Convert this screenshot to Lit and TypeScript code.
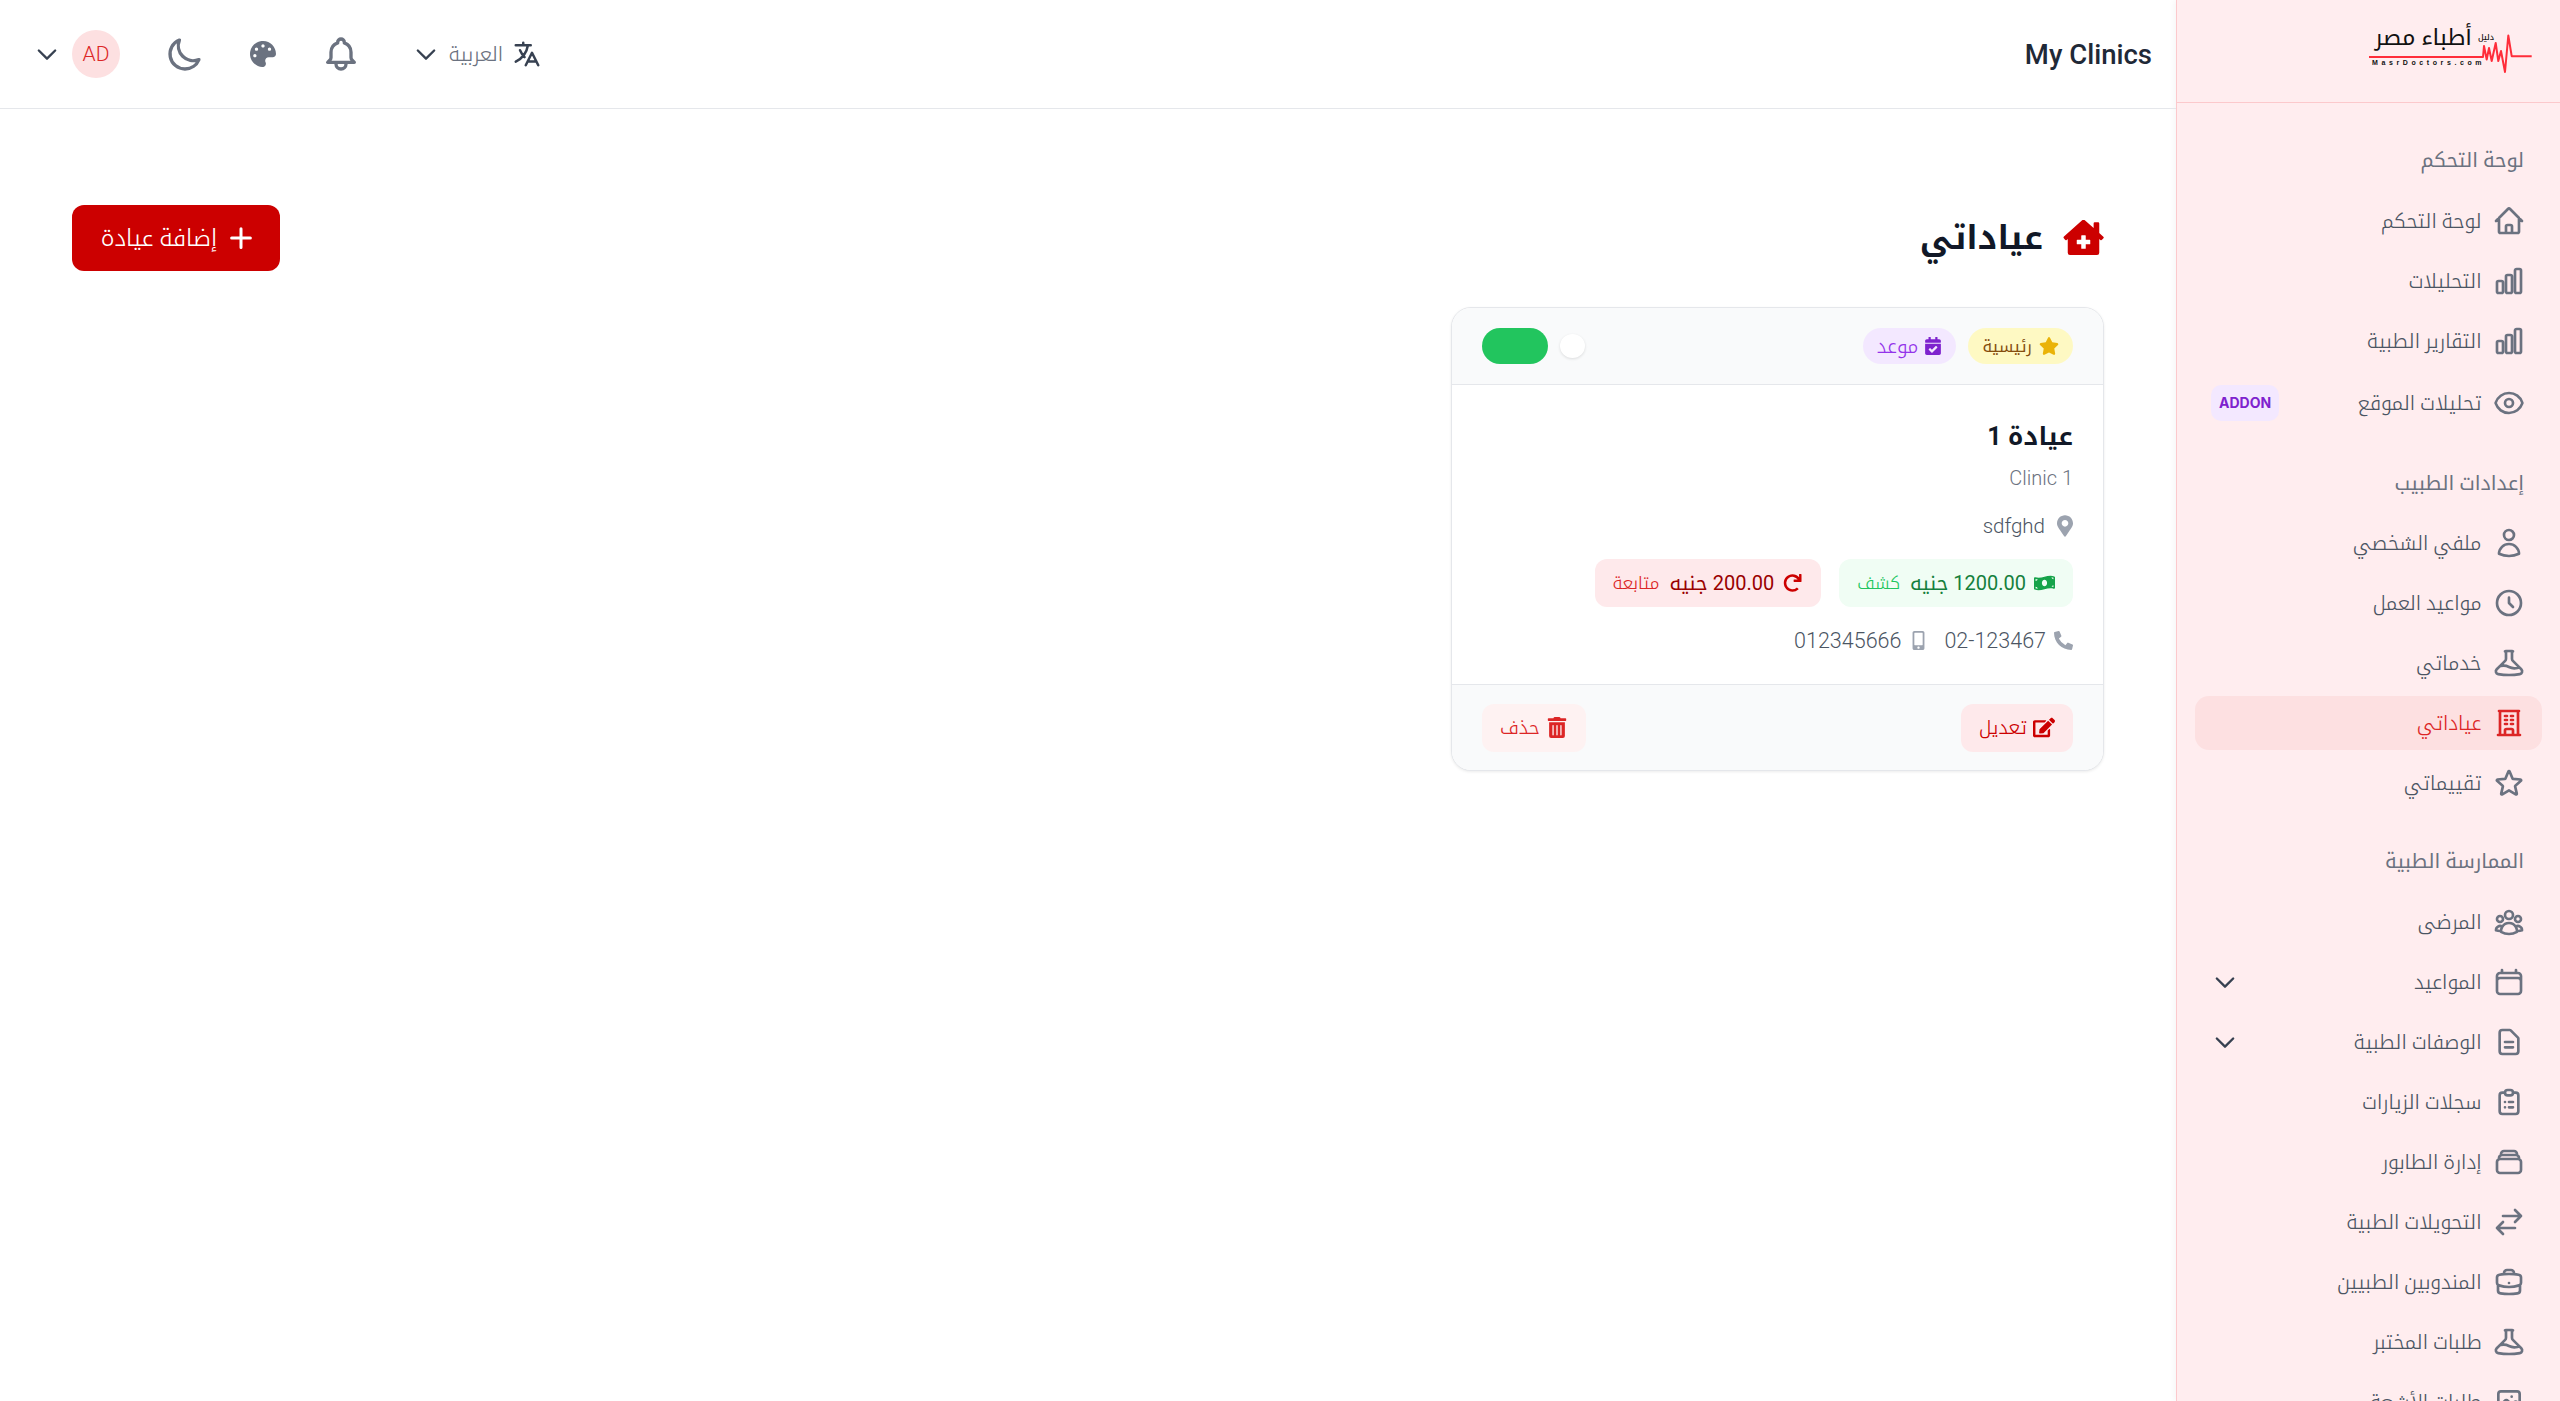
import { LitElement, html, css, svg } from "lit";
import { customElement } from "lit/decorators.js";

const O: Record<string, string> = {
  home: "M2.25 12l8.954-8.955c.44-.439 1.152-.439 1.591 0L21.75 12M4.5 9.75v10.125c0 .621.504 1.125 1.125 1.125H9.75v-4.875c0-.621.504-1.125 1.125-1.125h2.25c.621 0 1.125.504 1.125 1.125V21h4.125c.621 0 1.125-.504 1.125-1.125V9.75M8.25 21h8.25",
  chart: "M3 13.125C3 12.504 3.504 12 4.125 12h2.25c.621 0 1.125.504 1.125 1.125v6.75C7.5 20.496 6.996 21 6.375 21h-2.25A1.125 1.125 0 013 19.875v-6.75zM9.75 8.625c0-.621.504-1.125 1.125-1.125h2.25c.621 0 1.125.504 1.125 1.125v11.25c0 .621-.504 1.125-1.125 1.125h-2.25a1.125 1.125 0 01-1.125-1.125V8.625zM16.5 4.125c0-.621.504-1.125 1.125-1.125h2.25C20.496 3 21 3.504 21 4.125v15.75c0 .621-.504 1.125-1.125 1.125h-2.25a1.125 1.125 0 01-1.125-1.125V4.125z",
  eye: "M2.036 12.322a1.012 1.012 0 010-.639C3.423 7.51 7.36 4.5 12 4.5c4.638 0 8.573 3.007 9.963 7.178.07.207.07.431 0 .639C20.577 16.49 16.64 19.5 12 19.5c-4.638 0-8.573-3.007-9.963-7.178zM15 12a3 3 0 11-6 0 3 3 0 016 0z",
  user: "M15.75 6a3.75 3.75 0 11-7.5 0 3.75 3.75 0 017.5 0zM4.501 20.118a7.5 7.5 0 0114.998 0A17.933 17.933 0 0112 21.75c-2.676 0-5.216-.584-7.499-1.632z",
  clock: "M12 8v4l3 3m6-3a9 9 0 11-18 0 9 9 0 0118 0z",
  beaker: "M9.75 3.104v5.714a2.25 2.25 0 01-.659 1.591L5 14.5M9.75 3.104c-.251.023-.501.05-.75.082m.75-.082a24.301 24.301 0 014.5 0m0 0v5.714c0 .597.237 1.17.659 1.591L19.8 15.3M14.25 3.104c.251.023.501.05.75.082M19.8 15.3l-1.57.393A9.065 9.065 0 0112 15a9.065 9.065 0 00-6.23-.693L5 14.5m14.8.8l1.402 1.402c1.232 1.232.65 3.318-1.067 3.611A48.309 48.309 0 0112 21c-2.773 0-5.491-.235-8.135-.687-1.718-.293-2.3-2.379-1.067-3.61L5 14.5",
  building: "M3.75 21h16.5M4.5 3h15M5.25 3v18m13.5-18v18M9 6.75h1.5m-1.5 3h1.5m-1.5 3h1.5m3-6H15m-1.5 3H15m-1.5 3H15M9 21v-3.375c0-.621.504-1.125 1.125-1.125h3.75c.621 0 1.125.504 1.125 1.125V21",
  star: "M11.48 3.499a.562.562 0 011.04 0l2.125 5.111a.563.563 0 00.475.345l5.518.442c.499.04.701.663.321.988l-4.204 3.602a.563.563 0 00-.182.557l1.285 5.385a.562.562 0 01-.84.61l-4.725-2.885a.563.563 0 00-.586 0L6.982 20.54a.562.562 0 01-.84-.61l1.285-5.386a.562.562 0 00-.182-.557l-4.204-3.602a.563.563 0 01.321-.988l5.518-.442a.563.563 0 00.475-.345L11.48 3.5z",
  group: "M18 18.72a9.094 9.094 0 003.741-.479 3 3 0 00-4.682-2.72m.94 3.198l.001.031c0 .225-.012.447-.037.666A11.944 11.944 0 0112 21c-2.17 0-4.207-.576-5.963-1.584A6.062 6.062 0 016 18.719m12 0a5.971 5.971 0 00-.941-3.197m0 0A5.995 5.995 0 0012 12.75a5.995 5.995 0 00-5.058 2.772m0 0a3 3 0 00-4.681 2.72 8.986 8.986 0 003.74.477m.94-3.197a5.971 5.971 0 00-.94 3.197M15 6.75a3 3 0 11-6 0 3 3 0 016 0zm6 3a2.25 2.25 0 11-4.5 0 2.25 2.25 0 014.5 0zm-13.5 0a2.25 2.25 0 11-4.5 0 2.25 2.25 0 014.5 0z",
  calendar: "M6.75 3v2.25M17.25 3v2.25M3 18.75V7.5a2.25 2.25 0 012.25-2.25h13.5A2.25 2.25 0 0121 7.5v11.25m-18 0A2.25 2.25 0 005.25 21h13.5A2.25 2.25 0 0021 18.75m-18 0v-7.5A2.25 2.25 0 015.25 9h13.5A2.25 2.25 0 0121 11.25v7.5",
  doc: "M9 12h6m-6 4h6m2 5H7a2 2 0 01-2-2V5a2 2 0 012-2h5.586a1 1 0 01.707.293l5.414 5.414a1 1 0 01.293.707V19a2 2 0 01-2 2z",
  clip: "M9 5H7a2 2 0 00-2 2v12a2 2 0 002 2h10a2 2 0 002-2V7a2 2 0 00-2-2h-2M9 5a2 2 0 002 2h2a2 2 0 002-2M9 5a2 2 0 012-2h2a2 2 0 012 2m-3 7h3m-3 4h3m-6-4h.01M9 16h.01",
  stack: "M6 6.878V6a2.25 2.25 0 012.25-2.25h7.5A2.25 2.25 0 0118 6v.878m-12 0c.235-.083.487-.128.75-.128h10.5c.263 0 .515.045.75.128m-12 0A2.25 2.25 0 004.5 9v.878m13.5-3A2.25 2.25 0 0119.5 9v.878m0 0a2.246 2.246 0 00-.75-.128H5.25c-.263 0-.515.045-.75.128m15 0A2.25 2.25 0 0121 12v6a2.25 2.25 0 01-2.25 2.25H5.25A2.25 2.25 0 013 18v-6c0-.98.626-1.813 1.5-2.122",
  arrows: "M7.5 21L3 16.5m0 0L7.5 12M3 16.5h13.5m0-13.5L21 7.5m0 0L16.5 12M21 7.5H7.5",
  case: "M20.25 14.15v4.25c0 1.094-.787 2.036-1.872 2.18-2.087.277-4.216.42-6.378.42s-4.291-.143-6.378-.42c-1.085-.144-1.872-1.086-1.872-2.18v-4.25m16.5 0a2.18 2.18 0 00.75-1.661V8.706c0-1.081-.768-2.015-1.837-2.175a48.114 48.114 0 00-3.413-.387m4.5 8.006c-.194.165-.42.295-.673.38A23.978 23.978 0 0112 15.75c-2.648 0-5.195-.429-7.577-1.22a2.016 2.016 0 01-.673-.38m0 0A2.18 2.18 0 013 12.489V8.706c0-1.081.768-2.015 1.837-2.175a48.111 48.111 0 013.413-.387m7.5 0V5.25A2.25 2.25 0 0013.5 3h-3a2.25 2.25 0 00-2.25 2.25v.894m7.5 0a48.667 48.667 0 00-7.5 0M12 12.75h.008v.008H12v-.008z",
  photo: "M4 16l4.586-4.586a2 2 0 012.828 0L16 16m-2-2l1.586-1.586a2 2 0 012.828 0L20 14m-6-6h.01M6 20h12a2 2 0 002-2V6a2 2 0 00-2-2H6a2 2 0 00-2 2v12a2 2 0 002 2z",
  moon: "M20.354 15.354A9 9 0 018.646 3.646 9.003 9.003 0 0012 21a9.003 9.003 0 008.354-5.646z",
  bell: "M15 17h5l-1.405-1.405A2.032 2.032 0 0118 14.158V11a6.002 6.002 0 00-4-5.659V5a2 2 0 10-4 0v.341C7.67 6.165 6 8.388 6 11v3.159c0 .538-.214 1.055-.595 1.436L4 17h5m6 0v1a3 3 0 11-6 0v-1m6 0H9",
  translate: "M3 5h12M9 3v2m1.048 9.5A18.022 18.022 0 016.412 9m6.088 9h7M11 21l5-10 5 10M12.751 5C11.783 10.77 8.07 15.61 3 18.129",
  chevron: "M19 9l-7 7-7-7",
  plus: "M12 4.5v15m7.5-7.5h-15",
};

const F: Record<string, [string, string]> = {
  star: ["0 0 576 512", "M259.3 17.8L194 150.2 47.9 171.5c-26.2 3.8-36.7 36.1-17.7 54.6l105.7 103-25 145.5c-4.5 26.3 23.2 46 46.4 33.7L288 439.6l130.7 68.7c23.2 12.2 50.9-7.4 46.4-33.7l-25-145.5 105.7-103c19-18.5 8.5-50.8-17.7-54.6L382 150.2 316.7 17.8c-11.7-23.6-45.6-23.9-57.4 0z"],
  pin: ["0 0 384 512", "M172.268 501.67C26.97 291.031 0 263.413 0 192 0 85.961 85.961 0 192 0s192 85.961 192 192c0 71.413-26.97 99.031-172.268 309.67-9.535 13.774-29.93 13.773-39.464 0zM192 272c44.183 0 80-35.817 80-80s-35.817-80-80-80-80 35.817-80 80 35.817 80 80 80z"],
  phone: ["0 0 512 512", "M497.39 361.8l-112-48a24 24 0 0 0-28 6.9l-49.6 60.6A370.66 370.66 0 0 1 130.6 204.11l60.6-49.6a23.94 23.94 0 0 0 6.9-28l-48-112A24.16 24.16 0 0 0 122.6.61l-104 24A24 24 0 0 0 0 48c0 256.5 207.9 464 464 464a24 24 0 0 0 23.4-18.6l24-104a24.29 24.29 0 0 0-14.01-27.6z"],
  mobile: ["0 0 320 512", "M272 0H48C21.5 0 0 21.5 0 48v416c0 26.5 21.5 48 48 48h224c26.5 0 48-21.5 48-48V48c0-26.5-21.5-48-48-48zM160 480c-17.7 0-32-14.3-32-32s14.3-32 32-32 32 14.3 32 32-14.3 32-32 32zm112-108c0 6.6-5.4 12-12 12H60c-6.6 0-12-5.4-12-12V60c0-6.6 5.4-12 12-12h200c6.6 0 12 5.4 12 12v312z"],
  edit: ["0 0 576 512", "M402.6 83.2l90.2 90.2c3.8 3.8 3.8 10 0 13.8L274.4 405.6l-92.8 10.3c-12.4 1.4-22.9-9.1-21.5-21.5l10.3-92.8L388.8 83.2c3.8-3.8 10-3.8 13.8 0zm162-22.9l-48.8-48.8c-15.2-15.2-39.9-15.2-55.2 0l-35.4 35.4c-3.8 3.8-3.8 10 0 13.8l90.2 90.2c3.8 3.8 10 3.8 13.8 0l35.4-35.4c15.2-15.3 15.2-40 0-55.2zM384 346.2V448H64V128h229.8c3.2 0 6.2-1.3 8.5-3.5l40-40c7.6-7.6 2.2-20.5-8.5-20.5H48C21.5 64 0 85.5 0 112v352c0 26.5 21.5 48 48 48h352c26.5 0 48-21.5 48-48V306.2c0-10.7-12.9-16-20.5-8.5l-40 40c-2.2 2.3-3.5 5.3-3.5 8.5z"],
  trash: ["0 0 448 512", "M32 464a48 48 0 0 0 48 48h288a48 48 0 0 0 48-48V128H32zm272-256a16 16 0 0 1 32 0v224a16 16 0 0 1-32 0zm-96 0a16 16 0 0 1 32 0v224a16 16 0 0 1-32 0zm-96 0a16 16 0 0 1 32 0v224a16 16 0 0 1-32 0zM432 32H312l-9.4-18.7A24 24 0 0 0 281.1 0H166.8a23.72 23.72 0 0 0-21.4 13.3L136 32H16A16 16 0 0 0 0 48v32a16 16 0 0 0 16 16h416a16 16 0 0 0 16-16V48a16 16 0 0 0-16-16z"],
  redo: ["0 0 512 512", "M500.33 0h-47.41a12 12 0 0 0-12 12.57l4 82.76A247.42 247.42 0 0 0 256 8C119.34 8 7.9 119.53 8 256.19 8.1 393.07 119.1 504 256 504a247.1 247.1 0 0 0 166.18-63.91 12 12 0 0 0 .48-17.43l-34-34a12 12 0 0 0-16.38-.55A176 176 0 1 1 402.1 157.8l-101.53-4.87a12 12 0 0 0-12.57 12v47.41a12 12 0 0 0 12 12h200.33a12 12 0 0 0 12-12V12a12 12 0 0 0-12-12z"],
  money: ["0 0 640 512", "M621.16 54.46C582.37 38.19 543.55 32 504.75 32c-123.17-.01-246.33 62.34-369.5 62.34-30.89 0-61.76-3.92-92.65-13.72-3.47-1.1-6.95-1.62-10.35-1.62C15.04 79 0 92.32 0 110.81v317.26c0 12.63 7.23 24.6 18.84 29.46C57.63 473.81 96.45 480 135.25 480c123.17 0 246.34-62.35 369.51-62.35 30.89 0 61.76 3.92 92.65 13.72 3.47 1.1 6.95 1.62 10.35 1.62 17.21 0 32.25-13.32 32.25-31.81V83.93c-.01-12.64-7.24-24.6-18.85-29.47zM48 132.22c20.12 5.04 41.12 7.57 62.72 8.93C104.84 170.54 79 192.69 48 192.69v-60.47zm0 285v-47.78c34.37 0 62.18 27.27 63.71 61.4-22.53-1.81-43.59-6.31-63.71-13.62zM320 352c-44.19 0-80-42.99-80-96 0-53.02 35.82-96 80-96s80 42.98 80 96c0 53.03-35.83 96-80 96zm272 27.78c-17.52-4.39-35.71-6.85-54.32-8.44 5.87-26.08 27.5-45.88 54.32-49.28v57.72zm0-236.11c-30.89-3.91-54.86-29.7-55.81-61.55 19.54 2.17 38.09 6.23 55.81 12.66v48.89z"],
  palette: ["0 0 512 512", "M204.3 5C104.9 24.4 24.8 104.3 5.2 203.4c-37 187 131.7 326.4 258.8 306.7 41.2-6.4 61.4-54.6 42.5-91.7-23.1-45.4 9.9-98.4 60.9-98.4h79.7c35.8 0 64.8-29.6 64.9-65.3C511.5 97.1 368.1-26.9 204.3 5zM96 320c-17.7 0-32-14.3-32-32s14.3-32 32-32 32 14.3 32 32-14.3 32-32 32zm32-128c-17.7 0-32-14.3-32-32s14.3-32 32-32 32 14.3 32 32-14.3 32-32 32zm128-64c-17.7 0-32-14.3-32-32s14.3-32 32-32 32 14.3 32 32-14.3 32-32 32zm128 64c-17.7 0-32-14.3-32-32s14.3-32 32-32 32 14.3 32 32-14.3 32-32 32z"],
  calcheck: ["0 0 448 512", "M436 160H12c-6.627 0-12-5.373-12-12v-36c0-26.51 21.49-48 48-48h48V12c0-6.627 5.373-12 12-12h40c6.627 0 12 5.373 12 12v52h128V12c0-6.627 5.373-12 12-12h40c6.627 0 12 5.373 12 12v52h48c26.51 0 48 21.49 48 48v36c0 6.627-5.373 12-12 12zM12 192h424c6.627 0 12 5.373 12 12v260c0 26.51-21.49 48-48 48H48c-26.51 0-48-21.49-48-48V204c0-6.627 5.373-12 12-12zm333.296 95.947l-28.169-28.398c-4.667-4.705-12.265-4.736-16.97-.068L194.12 364.665l-45.98-46.352c-4.667-4.705-12.266-4.736-16.971-.068l-28.397 28.17c-4.705 4.667-4.736 12.265-.068 16.97l82.601 83.269c4.667 4.705 12.265 4.736 16.97.068l142.953-141.805c4.705-4.667 4.736-12.265.068-16.97z"],
  clinic: ["0 0 576 512", "M261 10L10 236a16 16 0 0 0-1 23l16 22a16 16 0 0 0 23 2L64 270V464a32 32 0 0 0 32 32H480a32 32 0 0 0 32-32V270l16 14a16 16 0 0 0 23-2l20-22a16 16 0 0 0-1-23L512 184V48a16 16 0 0 0-16-16h-48a16 16 0 0 0-16 16v66L315 10a40 40 0 0 0-54 0zM264 216h48a8 8 0 0 1 8 8v56h56a8 8 0 0 1 8 8v48a8 8 0 0 1-8 8h-56v56a8 8 0 0 1-8 8h-48a8 8 0 0 1-8-8v-56h-56a8 8 0 0 1-8-8v-48a8 8 0 0 1 8-8h56v-56a8 8 0 0 1 8-8z"],
};

const oi = (n: string, cls = "") => html`<svg class="oi ${cls}" viewBox="0 0 24 24" fill="none" stroke="currentColor" stroke-width="2" stroke-linecap="round" stroke-linejoin="round"><path d=${O[n]}></path></svg>`;
const fi = (n: string, cls = "") => html`<svg class="fi ${cls}" viewBox=${F[n][0]} fill="currentColor" fill-rule="evenodd"><path d=${F[n][1]}></path></svg>`;

type Item = { t: string; i: string; active?: boolean; chev?: boolean; addon?: boolean };
const NAV: { label: string; items: Item[] }[] = [
  { label: "لوحة التحكم", items: [
    { t: "لوحة التحكم", i: "home" },
    { t: "التحليلات", i: "chart" },
    { t: "التقارير الطبية", i: "chart" },
    { t: "تحليلات الموقع", i: "eye", addon: true },
  ]},
  { label: "إعدادات الطبيب", items: [
    { t: "ملفي الشخصي", i: "user" },
    { t: "مواعيد العمل", i: "clock" },
    { t: "خدماتي", i: "beaker" },
    { t: "عياداتي", i: "building", active: true },
    { t: "تقييماتي", i: "star" },
  ]},
  { label: "الممارسة الطبية", items: [
    { t: "المرضى", i: "group" },
    { t: "المواعيد", i: "calendar", chev: true },
    { t: "الوصفات الطبية", i: "doc", chev: true },
    { t: "سجلات الزيارات", i: "clip" },
    { t: "إدارة الطابور", i: "stack" },
    { t: "التحويلات الطبية", i: "arrows" },
    { t: "المندوبين الطبيين", i: "case" },
    { t: "طلبات المختبر", i: "beaker" },
    { t: "طلبات الأشعة", i: "photo" },
  ]},
];

@customElement("app-root")
export class AppRoot extends LitElement {
  static styles = css`
    :host {
      display: block; height: 100vh; overflow: hidden; background: #fff;
      font-family: Roboto, "Noto Kufi Arabic", "Noto Sans Arabic", "DejaVu Sans", sans-serif;
      font-weight: 300; color: #374151;
    }
    * { box-sizing: border-box; }
    .shell { display: flex; height: 100%; direction: rtl; }
    .oi { width: 32px; height: 32px; flex: none; display: block; }
    .fi { display: block; flex: none; }

    .side { width: 384px; flex: none; height: 100%; overflow: hidden; background: #ffedef; border-left: 1px solid #fcc9cc; box-shadow: -2px 0 6px rgba(0,0,0,.04); }
    .brand { height: 103px; border-bottom: 1px solid #fcc9cc; display: flex; align-items: center; justify-content: flex-start; padding-right: 28px; }
    .logo { width: 164px; height: 44px; position: relative; direction: ltr; display: block; }
    .logo svg { position: absolute; inset: 0; width: 100%; height: 100%; }
    .logo .ar { position: absolute; right: 60px; top: -7px; font-size: 23px; font-weight: 400; line-height: 32px; color: #111; white-space: nowrap; direction: rtl; }
    .logo .du { position: absolute; right: 38px; top: 4px; font-size: 8px; font-weight: 500; line-height: 10px; color: #111; direction: rtl; }
    .logo .en { position: absolute; left: 4px; top: 29px; font: 700 7px/9px "Liberation Sans", sans-serif; letter-spacing: 3.6px; color: #111; white-space: nowrap; }
    nav { padding: 44px 18px 0 18px; }
    .sec { margin-bottom: 38px; }
    .sec h3 { margin: 0 0 19.5px; padding: 0 18px 0 0; font-size: 20px; font-weight: 400; line-height: 27px; color: #6b7280; }
    .item { height: 54px; margin-bottom: 6px; border-radius: 14px; padding: 0 17.5px 0 16px; display: flex; align-items: center; gap: 11px; color: #4b5563; font-size: 20px; }
    .item.tall { height: 58px; }
    .item .oi { color: #6b7280; }
    .item .t { flex: 1; white-space: nowrap; }
    .item.active { background: #fde0e1; color: #dc2626; }
    .item.active .oi { color: #dc2626; }
    .item .cv { width: 28px; height: 28px; color: #374151; }
    .addon { background: #f3e8ff; color: #7e22ce; font: 700 14px/1 Inter, sans-serif; padding: 11px 8px; border-radius: 10px; direction: ltr; }

    .main { flex: 1; min-width: 0; display: flex; flex-direction: column; }
    header { height: 109px; flex: none; border-bottom: 1px solid #e5e7eb; display: flex; align-items: center; justify-content: space-between; padding: 0 24px 0 33px; }
    header h1 { margin: 0; font-size: 27.5px; font-weight: 500; color: #1f2937; direction: ltr; }
    .tools { display: flex; align-items: center; }
    .lang { display: flex; align-items: center; gap: 9px; color: #6b7280; font-size: 20px; margin-left: 51px; }
    .lang .tr { width: 30px; height: 30px; color: #374151; }
    .lang .cv { width: 28px; height: 28px; color: #374151; }
    .tool { width: 40px; height: 40px; color: #6b7280; margin-left: 38px; }
    .tool.last { margin-left: 44.5px; }
    .tool .oi { width: 40px; height: 40px; }
    .tool .fi { width: 26px; height: 26px; margin: 7px; }
    .avatar { width: 48px; height: 48px; border-radius: 50%; background: #fde0e1; color: #dc2626; display: flex; align-items: center; justify-content: center; font-size: 21px; margin-left: 11px; }
    .cv2 { width: 28px; height: 28px; color: #374151; }

    .content { padding: 96px 72px 0; }
    .head { display: flex; align-items: center; justify-content: space-between; height: 66px; margin-bottom: 36px; }
    .title { display: flex; align-items: center; gap: 20px; font-size: 33px; font-weight: 700; color: #111827; margin: 0; }
    .title svg { width: 41px; height: 36px; color: #cc0000; }
    .add { height: 66px; width: 208px; background: #cc0000; color: #fff; border: 0; border-radius: 12px; padding: 0 0 0 5px; display: flex; align-items: center; justify-content: center; gap: 9px; font: inherit; font-size: 23.5px; }
    .add .oi { width: 30px; height: 30px; stroke-width: 2.4; }

    .card { width: 653px; height: 464px; border: 1px solid #e5e7eb; border-radius: 20px; overflow: hidden; background: #fff; box-shadow: 0 1px 3px rgba(0,0,0,.08); display: flex; flex-direction: column; }
    .ctop { height: 77px; flex: none; background: #f9fafb; border-bottom: 1px solid #e5e7eb; display: flex; align-items: center; justify-content: space-between; padding: 0 30px; }
    .badges, .toggle { display: flex; align-items: center; gap: 12px; }
    .badge { height: 36px; border-radius: 18px; padding: 0 14px; display: flex; align-items: center; gap: 7px; font-size: 16.5px; font-weight: 400; }
    .badge svg { width: 18px; height: 18px; }
    .b-y { background: #fef9c3; color: #854d0e; }
    .b-y svg { color: #eab308; width: 20px; }
    .b-p { background: #f3e8ff; color: #9333ea; font-weight: 300; font-size: 19.5px; gap: 6px; padding: 0 14px; }
    .b-p svg { color: #7e22ce; }
    .knob { width: 25px; height: 24px; border-radius: 50%; background: #fff; box-shadow: 0 1px 3px rgba(0,0,0,.12); }
    .track { width: 66px; height: 36px; border-radius: 18px; background: #22c55e; }
    .cbody { flex: 1; padding: 32px 30px 0; text-align: right; }
    .cbody h2 { margin: 0; font-size: 25px; line-height: 40px; font-weight: 700; color: #111827; }
    .sub { font-size: 20px; line-height: 28px; color: #6b7280; margin-top: 7px; }
    .loc { display: flex; align-items: center; gap: 12px; font-size: 20.5px; line-height: 30px; color: #4b5563; margin-top: 19px; }
    .loc svg { width: 16px; height: 22px; color: #9ca3af; }
    .prices { display: flex; gap: 18px; margin-top: 18px; }
    .price { height: 48px; border-radius: 12px; padding: 0 18px; display: flex; align-items: center; gap: 10px; font-size: 20px; font-weight: 400; }
    .price small { font-size: 17.5px; font-weight: 300; }
    .price svg { width: 21px; height: 18px; margin-left: -2px; }
    .p-g { background: #f0fdf4; color: #15803d; }
    .p-g svg { color: #16a34a; }
    .p-g small { color: #22c55e; }
    .p-r { background: #fee9eb; color: #990000; }
    .p-r svg { color: #cc0000; }
    .p-r small { color: #dc2626; }
    .phones { display: flex; gap: 16px; margin-top: 18.5px; font-size: 21.5px; line-height: 30px; color: #4b5563; }
    .phones span { display: flex; align-items: center; gap: 8px; direction: rtl; }
    .phones svg { width: 19px; height: 19px; color: #9ca3af; }
    .phones b { font-weight: 300; direction: ltr; }
    .cfoot { height: 86px; flex: none; background: #f9fafb; border-top: 1px solid #e5e7eb; display: flex; align-items: center; justify-content: space-between; padding: 0 30px; }
    .btn { height: 48px; border-radius: 12px; padding: 0 18px; display: flex; align-items: center; gap: 6px; font-size: 19px; }
    .btn svg { width: 22px; height: 21px; }
    .e { background: #fee9eb; color: #cc0000; }
    .d { background: #fef2f2; color: #dc2626; }
  `;

  private logoLine() {
    return svg`<path d="M1 28 H115 L116 17 L118.7 30.5 L121 19 L123.7 32 L127.7 14 L130.3 32 L133 22 L137 43 L140.3 6.5 L143.7 27.2 H163.7" stroke="#ff2d3a" stroke-width="2" fill="none" stroke-linejoin="round"/>`;
  }

  render() {
    return html`<div class="shell">
      <aside class="side">
        <div class="brand">
          <div class="logo">
            <svg viewBox="0 0 164 44">${this.logoLine()}</svg>
            <span class="ar">أطباء مصر</span>
            <span class="du">دليل</span>
            <span class="en">MasrDoctors.com</span>
          </div>
        </div>
        <nav>
          ${NAV.map((s) => html`<section class="sec">
            <h3>${s.label}</h3>
            ${s.items.map((it) => html`<div class="item ${it.active ? "active" : ""} ${it.addon ? "tall" : ""}">
              ${oi(it.i)}
              <span class="t">${it.t}</span>
              ${it.addon ? html`<span class="addon">ADDON</span>` : ""}
              ${it.chev ? oi("chevron", "cv") : ""}
            </div>`)}
          </section>`)}
        </nav>
      </aside>
      <div class="main">
        <header>
          <h1>My Clinics</h1>
          <div class="tools">
            <div class="lang">${oi("translate", "tr")}<span>العربية</span>${oi("chevron", "cv")}</div>
            <div class="tool">${oi("bell")}</div>
            <div class="tool">${fi("palette")}</div>
            <div class="tool last">${oi("moon")}</div>
            <div class="avatar">AD</div>
            ${oi("chevron", "cv2")}
          </div>
        </header>
        <div class="content">
          <div class="head">
            <h2 class="title">${fi("clinic")}<span>عياداتي</span></h2>
            <button class="add">${oi("plus")}<span>إضافة عيادة</span></button>
          </div>
          <article class="card">
            <div class="ctop">
              <div class="badges">
                <span class="badge b-y">${fi("star")}رئيسية</span>
                <span class="badge b-p">${fi("calcheck")}موعد</span>
              </div>
              <div class="toggle"><span class="knob"></span><span class="track"></span></div>
            </div>
            <div class="cbody">
              <h2>عيادة 1</h2>
              <div class="sub">Clinic 1</div>
              <div class="loc">${fi("pin")}<span>sdfghd</span></div>
              <div class="prices">
                <div class="price p-g">${fi("money")}<span>1200.00 جنيه</span><small>كشف</small></div>
                <div class="price p-r">${fi("redo")}<span>200.00 جنيه</span><small>متابعة</small></div>
              </div>
              <div class="phones">
                <span>${fi("phone")}<b>02-123467</b></span>
                <span>${fi("mobile")}<b>012345666</b></span>
              </div>
            </div>
            <div class="cfoot">
              <div class="btn e">${fi("edit")}تعديل</div>
              <div class="btn d">${fi("trash")}حذف</div>
            </div>
          </article>
        </div>
      </div>
    </div>`;
  }
}
